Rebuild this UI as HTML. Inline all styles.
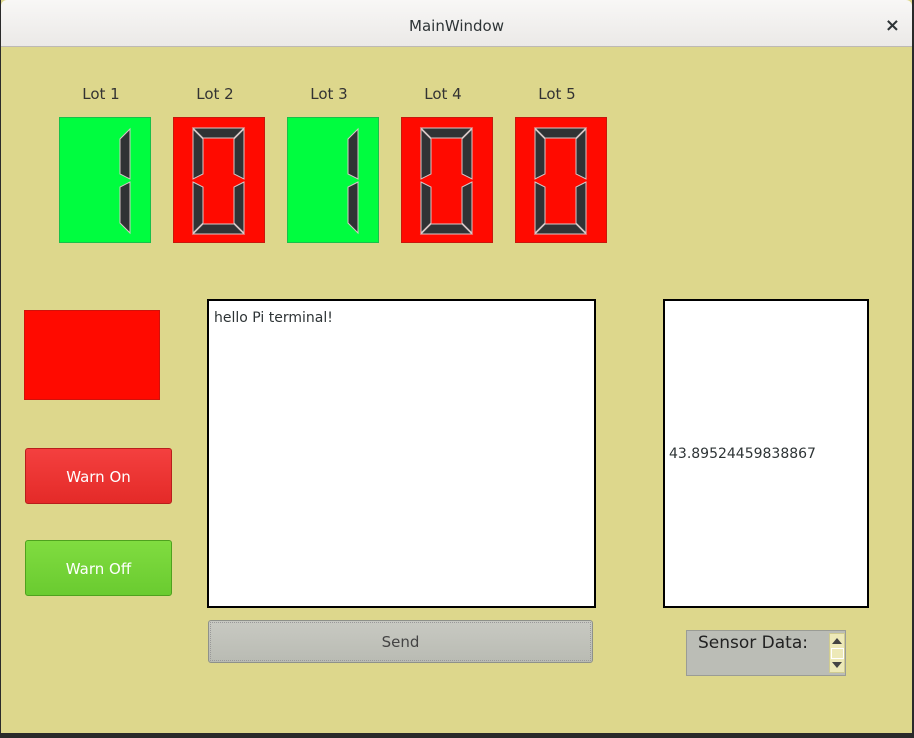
<html><head><style>
body{margin:0;width:914px;height:738px;background:#2a2a2a;font-family:"DejaVu Sans","Liberation Sans",sans-serif;overflow:hidden;position:relative}
.a{position:absolute}
#win{left:1px;top:0;width:911px;height:733px;background:#ddd78c}
#tb{left:1px;top:0;width:911px;height:46px;background:linear-gradient(#f8f7f6,#ebe9e7);border-bottom:1px solid #bdb9b4;border-radius:6px 6px 0 0;text-align:center;line-height:52px;font-size:15px;color:#2e3436}
.lbl{font-size:15px;color:#333;width:92px;text-align:center;top:85px}
.box{top:117px;width:90px;height:124px}
.g{background:#00fd3f;border:1px solid #19c04a}
.r{background:#ff0a00;border:1px solid #c8180c}
.btn{left:25px;width:145px;height:54px;border-radius:3px;color:#fff;font-size:15px;text-align:center;line-height:56px}
</style></head><body>
<div class="a" id="win"></div>
<div class="a" id="tb">MainWindow<span class="a" style="right:12px;top:0;font-size:18px;font-weight:bold">×</span></div>

<div class="a lbl" style="left:55px">Lot 1</div>
<div class="a lbl" style="left:169px">Lot 2</div>
<div class="a lbl" style="left:283px">Lot 3</div>
<div class="a lbl" style="left:397px">Lot 4</div>
<div class="a lbl" style="left:511px">Lot 5</div>

<svg width="0" height="0" style="position:absolute"><defs>
<g id="one" fill="#303335" stroke="#d8c8c8" stroke-width="1">
<polygon points="70,11 60,21 60,56 70,61"/><polygon points="70,64 60,69 60,105 70,115"/></g>
<g id="zero" fill="#303335" stroke="#d8c8c8" stroke-width="1">
<polygon points="19,10 70,10 60,20 29,20"/><polygon points="19,116 70,116 60,106 29,106"/>
<polygon points="19,11 29,21 29,56 19,61"/><polygon points="19,64 29,69 29,105 19,115"/>
<polygon points="70,11 60,21 60,56 70,61"/><polygon points="70,64 60,69 60,105 70,115"/></g>
</defs></svg>
<div class="a box g" style="left:59px"><svg width="92" height="126"><use href="#one"/></svg></div>
<div class="a box r" style="left:173px"><svg width="92" height="126"><use href="#zero"/></svg></div>
<div class="a box g" style="left:287px"><svg width="92" height="126"><use href="#one"/></svg></div>
<div class="a box r" style="left:401px"><svg width="92" height="126"><use href="#zero"/></svg></div>
<div class="a box r" style="left:515px"><svg width="92" height="126"><use href="#zero"/></svg></div>

<div class="a" style="left:24px;top:310px;width:134px;height:88px;background:#ff0a00;border:1px solid #d0120a"></div>
<div class="a btn" style="top:448px;background:linear-gradient(#f4403f,#e42a28);border:1px solid #b81e1c">Warn On</div>
<div class="a btn" style="top:540px;background:linear-gradient(#80dc40,#6acb30);border:1px solid #4ea21e">Warn Off</div>

<div class="a" style="left:207px;top:299px;width:385px;height:305px;background:#fff;border:2px solid #000"><div style="padding:9px 5px;font-size:14px;color:#2e3436">hello Pi terminal!</div></div>
<div class="a" style="left:663px;top:299px;width:202px;height:305px;background:#fff;border:2px solid #000"><div style="position:absolute;top:145px;left:4px;font-size:14px;color:#2e3436">43.89524459838867</div></div>

<div class="a" style="left:208px;top:620px;width:383px;height:41px;background:linear-gradient(#c8c9c2,#b9bbb3);border:1px solid #8e918a;border-radius:3px;text-align:center;line-height:43px;font-size:15px;color:#444"><div style="position:absolute;inset:1px;border:1px dotted #999"></div>Send</div>

<div class="a" style="left:686px;top:630px;width:158px;height:44px;background:#bbbdb6;border:1px solid #9a9c95">
<div style="position:absolute;left:11px;top:2px;font-size:17px;color:#222">Sensor Data:</div>
<div style="position:absolute;left:142px;top:2px;width:14px;height:38px;background:#ede9b8;border:1px solid #cfcb90">
<div style="position:absolute;left:2px;top:4px;width:0;height:0;border-left:5px solid transparent;border-right:5px solid transparent;border-bottom:6px solid #444"></div>
<div style="position:absolute;left:1px;top:14px;width:11px;height:9px;border:1px solid #fff"></div>
<div style="position:absolute;left:2px;top:28px;width:0;height:0;border-left:5px solid transparent;border-right:5px solid transparent;border-top:6px solid #444"></div>
</div></div>
</body></html>
